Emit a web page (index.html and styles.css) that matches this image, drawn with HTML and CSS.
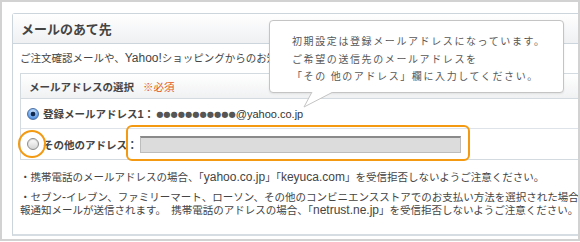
FILE: index.html
```html
<!DOCTYPE html>
<html>
<head>
    <meta charset="utf-8">
    <title>メールのあて先</title>
    <link rel="stylesheet" href="styles.css">
</head>
<body>
    <div class="frame">
        <div class="panel">
            <div class="panel-head">
                <h2>メールのあて先</h2>
            </div>
            <div class="panel-body">
                <p class="intro">ご注文確認メールや、<span class="en">Yahoo!</span>ショッピングからのお知らせメールの送信先メールアドレスを選択してください。</p>

                <div class="select-box">
                    <div class="select-head">メールアドレスの選択<span class="req">※必須</span></div>
                    <div class="opt">
                        <span class="radio on"></span>
                        <b>登録メールアドレス<span class="en">1</span>：</b><span class="mask">●●●●●●●●●●●</span><span class="addr">@yahoo.co.jp</span>
                    </div>
                    <div class="opt opt-other">
                        <span class="radio"></span>
                        <b>その他のアドレス：</b><span class="field"></span>
                    </div>
                </div>

                <p class="note">・携帯電話のメールアドレスの場合、「<span class="en">yahoo.co.jp</span>」「<span class="en">keyuca.com</span>」を受信拒否しないようご注意ください。</p>
                <p class="note">・セブン<span class="en">-</span>イレブン、ファミリーマート、ローソン、その他のコンビニエンスストアでのお支払い方法を選択された場合、情<br>報通知メールが送信されます。　携帯電話のアドレスの場合、「<span class="en">netrust.ne.jp</span>」を受信拒否しないようご注意ください。</p>
            </div>
        </div>

        <!-- 注釈（オレンジの囲み） -->
        <div class="mark mark-radio"></div>
        <div class="mark mark-field"></div>

        <div class="tip">
            <p>初期設定は登録メールアドレスになっています。<br>ご希望の送信先のメールアドレスを<br>「その 他のアドレス」欄に入力してください。</p>
            <svg class="tip-tail" width="40" height="17" viewBox="0 0 40 17">
                <polygon points="12,0 4,15 33,0" fill="#fff"/>
                <polyline points="12,0 4,15 33,0" fill="none" stroke="#c4c4c4" stroke-width="1"/>
            </svg>
        </div>
    </div>
</body>
</html>
```

FILE: styles.css
```css
body {
    margin: 0;
    font-family: "Liberation Sans", "Noto Sans CJK JP", sans-serif;
    color: #3a3a3a;
    background: #fff;
}

.frame {
    position: relative;
    width: 580px;
    height: 241px;
    box-sizing: border-box;
    border: 2px solid #d2d2d2;
    overflow: hidden;
    background: #fff;
}

.panel {
    width: 640px;
    margin: 11px 0 0 10px;
    border: 1px solid #cdd5dc;
    border-bottom: 2px solid #d6dee4;
    border-radius: 3px 0 0 0;
}

.panel-head {
    height: 29px;
    display: flex;
    align-items: center;
    padding-left: 8px;
    background: linear-gradient(#ffffff, #eef0f2);
    border-bottom: 1px solid #cdd5dc;
}

.panel-head h2 {
    margin: 0;
    font-size: 13px;
    font-weight: bold;
    color: #444;
}

.panel-body {
    padding: 6px 0 17px 7px;
    white-space: nowrap;
    font-size: 10.5px;
}

.en {
    font-size: 12px;
}

.intro {
    margin: 0;
    line-height: 16px;
    color: #444;
}

.select-box {
    margin-top: 7px;
    border: 1px solid #d3dae0;
    border-right: none;
}

.select-head {
    height: 24px;
    display: flex;
    align-items: center;
    padding-left: 8px;
    font-weight: bold;
    color: #444;
    background: linear-gradient(#ffffff, #f0f1f2);
    border-bottom: 1px solid #d3dae0;
}

.req {
    margin-left: 9px;
    font-weight: normal;
    color: #e2581a;
}

.opt {
    height: 29px;
    display: flex;
    align-items: center;
    padding-left: 6px;
    border-bottom: 1px solid #dde3e8;
}

.opt-other {
    height: 30px;
    border-bottom: none;
}

.opt b {
    color: #444;
}

.opt .en {
    font-size: 11px;
}

.radio {
    width: 12px;
    height: 12px;
    box-sizing: border-box;
    margin-right: 4px;
    border-radius: 50%;
    border: 1px solid #8c8c8c;
    background: linear-gradient(#ffffff, #d4d4d4);
    box-shadow: inset 0 1px 1px rgba(0,0,0,0.15);
}

.radio.on {
    border-color: #4a6fa5;
    background:
        radial-gradient(circle, #10284d 0 2px, transparent 2.7px),
        radial-gradient(circle at 50% 30%, #d6e8fc, #69a4ea 60%, #3270c6);
    box-shadow: none;
}

.mask {
    margin-left: 2px;
    font-family: "DejaVu Sans", sans-serif;
    font-size: 8.3px;
    color: #555;
}

.addr {
    font-size: 11px;
    color: #333;
}

.field {
    width: 321px;
    height: 17px;
    box-sizing: border-box;
    margin-left: 2px;
    background: #dcdcdc;
    border: 1px solid #bdbdbd;
    border-top: 2px solid #8a8a8a;
}

.note {
    margin: 11px 0 0 0;
    line-height: 13px;
    color: #444;
}

.note + .note {
    margin-top: 7px;
}

.mark {
    position: absolute;
    box-sizing: border-box;
    border: 2px solid #f39a12;
}

.mark-radio {
    left: 16px;
    top: 128px;
    width: 28px;
    height: 28px;
    border-radius: 50%;
}

.mark-field {
    left: 124px;
    top: 123px;
    width: 344px;
    height: 36px;
    border-radius: 6px;
}

.tip {
    position: absolute;
    left: 267px;
    top: 18px;
    width: 295px;
    height: 73px;
    box-sizing: border-box;
    padding: 11px 0 0 22px;
    background: #fff;
    border: 1px solid #c4c4c4;
    border-radius: 4px;
    box-shadow: 0 1px 2px rgba(0,0,0,0.08);
}

.tip p {
    margin: 0;
    font-family: "Noto Sans CJK JP", sans-serif;
    font-size: 10px;
    line-height: 17.5px;
    letter-spacing: 1.6px;
    color: #575757;
    white-space: nowrap;
}

.tip-tail {
    position: absolute;
    left: 30px;
    top: 71px;
}
```
